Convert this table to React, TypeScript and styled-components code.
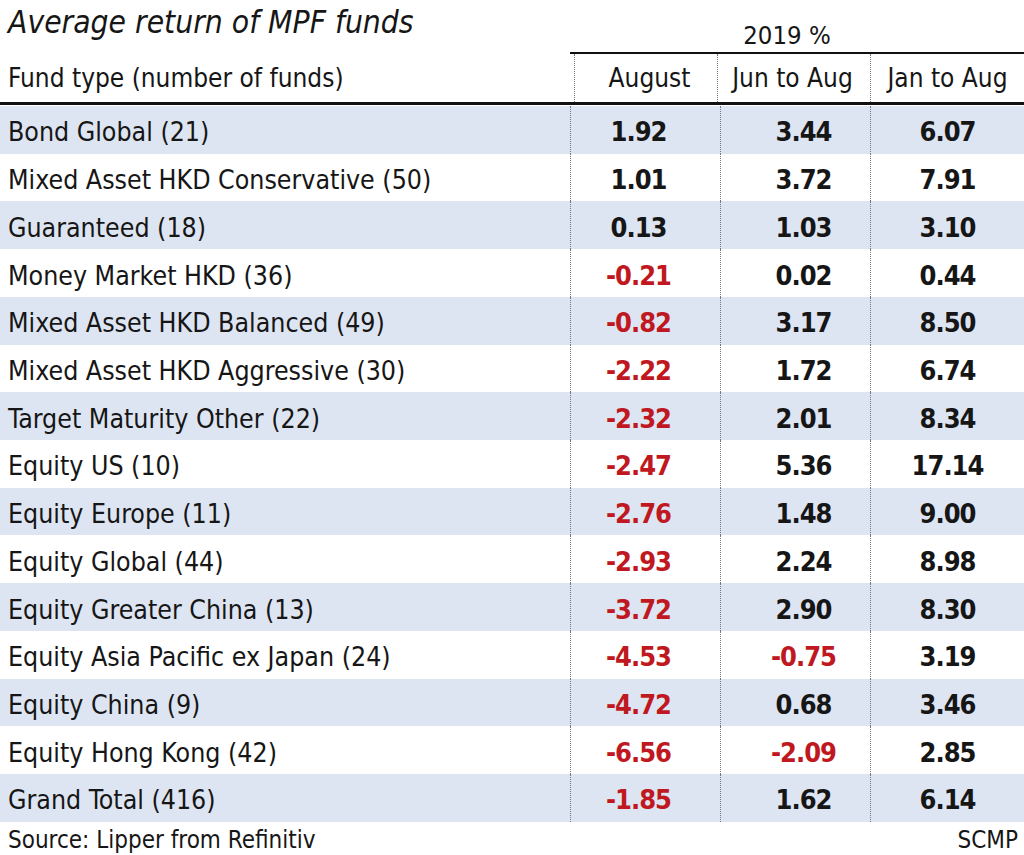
import * as React from 'react';
import styled, { createGlobalStyle } from 'styled-components';

const GlobalStyle = createGlobalStyle`
    html, body {
        margin: 0;
        padding: 0;
        background: #ffffff;
    }
    body {
        font-family: 'DejaVu Sans Condensed', 'Liberation Sans Narrow', 'Roboto', sans-serif;
        font-stretch: condensed;
        color: #161616;
    }
`;

const COLS = '570px 150px 150px 154px';

const Page = styled.div`
    width: 1024px;
    height: 855px;
    overflow: hidden;
`;

const TopRow = styled.div`
    display: grid;
    grid-template-columns: 570px 454px;
    height: 54px;
`;

const Title = styled.h1`
    margin: 0;
    padding: 3px 0 0 8px;
    font-size: 31.5px;
    font-weight: normal;
    font-style: italic;
    line-height: 38px;
    align-self: start;
`;

const Year = styled.div`
    align-self: end;
    border-bottom: 2px solid #111;
    text-align: center;
    padding-right: 20px;
    font-size: 25.5px;
    line-height: 34px;
`;

const HeadRow = styled.div`
    display: grid;
    grid-template-columns: ${COLS};
    height: 48px;
    border-bottom: 3px solid #111;
`;

const HeadCell = styled.div<{ $first?: boolean; $shift?: number }>`
    display: flex;
    align-items: center;
    justify-content: ${(p) => (p.$first ? 'flex-start' : 'center')};
    padding-left: ${(p) => (p.$first ? '8px' : '0')};
    border-left: ${(p) => (p.$first ? 'none' : '1px dotted #777')};
    font-size: 26px;
    ${(p) => (p.$shift ? `transform: translateX(${p.$shift}px);` : '')}
`;

const Body = styled.div`
    padding-top: 1px;
`;

const Row = styled.div<{ $shaded: boolean }>`
    display: grid;
    grid-template-columns: ${COLS};
    height: 47.73px;
    background: ${(p) => (p.$shaded ? '#dee5f2' : '#ffffff')};
`;

const NameCell = styled.div`
    display: flex;
    align-items: center;
    padding: 4px 0 0 8px;
    font-size: 26.5px;
    white-space: nowrap;
`;

const ValueCell = styled.div<{ $neg: boolean; $offset: number }>`
    display: flex;
    align-items: center;
    justify-content: center;
    padding-top: 4px;
    border-left: 1px dotted #777;
    font-size: 27px;
    font-weight: bold;
    letter-spacing: -1px;
    color: ${(p) => (p.$neg ? '#c01820' : '#161616')};
    & > span {
        transform: translateX(${(p) => p.$offset}px);
    }
`;

const Footer = styled.div`
    display: flex;
    justify-content: space-between;
    align-items: center;
    height: 33px;
    padding: 2px 6px 0 8px;
    font-size: 24px;
`;

const rows: [string, string, string, string][] = [
    ['Bond Global (21)', '1.92', '3.44', '6.07'],
    ['Mixed Asset HKD Conservative (50)', '1.01', '3.72', '7.91'],
    ['Guaranteed (18)', '0.13', '1.03', '3.10'],
    ['Money Market HKD (36)', '-0.21', '0.02', '0.44'],
    ['Mixed Asset HKD Balanced (49)', '-0.82', '3.17', '8.50'],
    ['Mixed Asset HKD Aggressive (30)', '-2.22', '1.72', '6.74'],
    ['Target Maturity Other (22)', '-2.32', '2.01', '8.34'],
    ['Equity US (10)', '-2.47', '5.36', '17.14'],
    ['Equity Europe (11)', '-2.76', '1.48', '9.00'],
    ['Equity Global (44)', '-2.93', '2.24', '8.98'],
    ['Equity Greater China (13)', '-3.72', '2.90', '8.30'],
    ['Equity Asia Pacific ex Japan (24)', '-4.53', '-0.75', '3.19'],
    ['Equity China (9)', '-4.72', '0.68', '3.46'],
    ['Equity Hong Kong (42)', '-6.56', '-2.09', '2.85'],
    ['Grand Total (416)', '-1.85', '1.62', '6.14'],
];

// column centre corrections (values sit a little off the column middle)
const offsets = [-7, 8, 0];

const App: React.FC = (): JSX.Element => {
    return (
        <Page>
            <GlobalStyle />
            <TopRow>
                <Title>Average return of MPF funds</Title>
                <Year>2019 %</Year>
            </TopRow>
            <HeadRow>
                <HeadCell $first>Fund type (number of funds)</HeadCell>
                <HeadCell $shift={4}>August</HeadCell>
                <HeadCell $shift={-3}>Jun to Aug</HeadCell>
                <HeadCell>Jan to Aug</HeadCell>
            </HeadRow>
            <Body>
                {rows.map((row, i) => {
                    return (
                        <Row key={row[0]} $shaded={i % 2 === 0}>
                            <NameCell>{row[0]}</NameCell>
                            {row.slice(1).map((v, j) => (
                                <ValueCell key={j} $neg={v.startsWith('-')} $offset={offsets[j]}>
                                    <span>{v}</span>
                                </ValueCell>
                            ))}
                        </Row>
                    );
                })}
            </Body>
            <Footer>
                <span>Source: Lipper from Refinitiv</span>
                <span>SCMP</span>
            </Footer>
        </Page>
    );
};

export default App;
